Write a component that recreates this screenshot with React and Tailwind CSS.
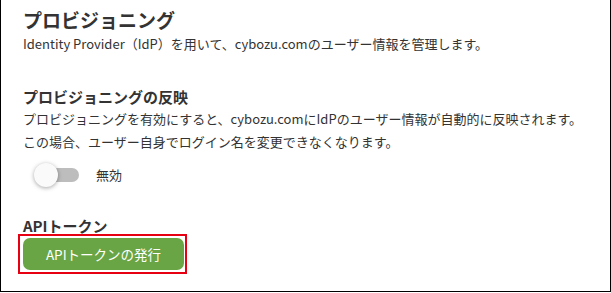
export default function App() {
  const font = { fontFamily: '"Noto Sans CJK JP", "Noto Sans", sans-serif' };
  return (
    <div className="w-[611px] h-[293px] bg-white">
      <div
        className="w-[611px] h-[292px] border-l border-r border-b border-black bg-white text-[#333] flex flex-col"
        style={font}
      >
        <div className="pl-[22px] pt-[7px]">
          <h1 className="text-[19px] font-bold leading-[26px]">プロビジョニング</h1>
          <p className="text-[13px] leading-[20px] mt-px">
            Identity Provider（IdP）を用いて、cybozu.comのユーザー情報を管理します。
          </p>
        </div>

        <div className="pl-[22px] mt-[33px]">
          <h2 className="text-[15px] font-bold leading-[20px]">プロビジョニングの反映</h2>
          <p className="text-[13px] leading-[23px]">
            プロビジョニングを有効にすると、cybozu.comにIdPのユーザー情報が自動的に反映されます。
            <br />
            この場合、ユーザー自身でログイン名を変更できなくなります。
          </p>
          <div className="flex items-center mt-[10px] h-[24px]">
            <div className="relative w-[46px] h-[24px] ml-[11px]">
              <div className="absolute left-[2px] top-[5px] w-[43px] h-[14px] rounded-full bg-[#bdbdbd]" />
              <div className="absolute left-0 top-0 w-[24px] h-[24px] rounded-full bg-[#fafafa] shadow-[0_1px_4px_rgba(0,0,0,0.35)]" />
            </div>
            <span className="ml-[16px] text-[13px]">無効</span>
          </div>
        </div>

        <div className="mt-[31px]">
          <h2 className="pl-[22px] text-[15px] font-bold leading-[16px]">APIトークン</h2>
          <div className="ml-[17px] inline-block border-2 border-[#e60012] p-[3px] pr-[1px] pt-[2px] pb-[2px]">
            <button className="w-[161px] h-[32px] rounded-[7px] bg-[#69a544] text-white text-[13.5px] flex items-center justify-center">
              APIトークンの発行
            </button>
          </div>
        </div>
      </div>
    </div>
  );
}
